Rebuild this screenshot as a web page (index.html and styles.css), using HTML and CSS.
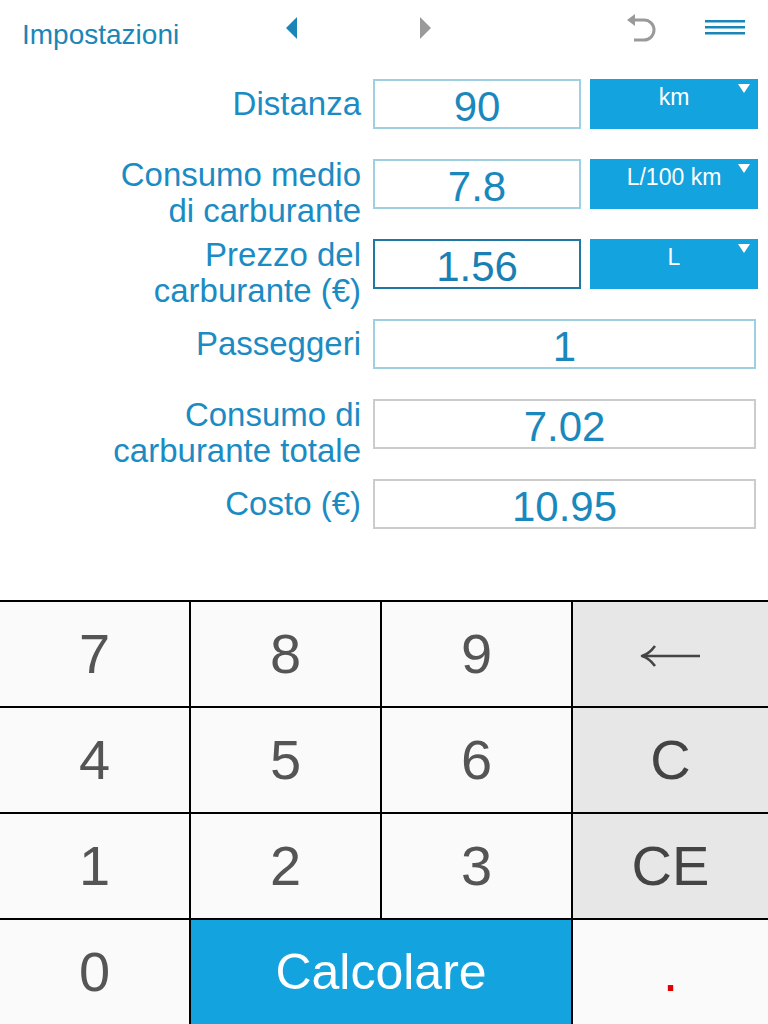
FILE: index.html
```html
<!DOCTYPE html>
<html lang="it">
<head>
<meta charset="utf-8">
<title>Calcolatore carburante</title>
<link rel="stylesheet" href="styles.css">
</head>
<body>
<div class="app">
  <header class="toolbar">
    <span class="settings">Impostazioni</span>
    <svg class="nav prev" width="11" height="22" viewBox="0 0 11 22"><path d="M11 0 L0 11 L11 22 Z" fill="#1a86b8"/></svg>
    <svg class="nav next" width="11" height="22" viewBox="0 0 11 22"><path d="M0 0 L11 11 L0 22 Z" fill="#9a9a9a"/></svg>
    <svg class="undo" width="32" height="32" viewBox="0 0 32 32"><path d="M8 8 H19 A10 10 0 0 1 19 28 H9" fill="none" stroke="#9a9a9a" stroke-width="3"/><path d="M2 8 L10 2 L10 14 Z" fill="#9a9a9a"/></svg>
    <svg class="menu" width="40" height="16" viewBox="0 0 40 16"><rect x="0" y="1" width="40" height="2.5" fill="#1a86b8"/><rect x="0" y="7" width="40" height="2.5" fill="#1a86b8"/><rect x="0" y="13" width="40" height="2.5" fill="#1a86b8"/></svg>
  </header>

  <main class="form">
    <div class="row">
      <div class="label single">Distanza</div>
      <div class="field input">90</div>
      <div class="unit">km<span class="caret"></span></div>
    </div>
    <div class="row">
      <div class="label">Consumo medio<br>di carburante</div>
      <div class="field input">7.8</div>
      <div class="unit">L/100 km<span class="caret"></span></div>
    </div>
    <div class="row">
      <div class="label">Prezzo del<br>carburante (€)</div>
      <div class="field input active">1.56</div>
      <div class="unit">L<span class="caret"></span></div>
    </div>
    <div class="row">
      <div class="label single">Passeggeri</div>
      <div class="field input wide">1</div>
    </div>
    <div class="row">
      <div class="label">Consumo di<br>carburante totale</div>
      <div class="field result wide">7.02</div>
    </div>
    <div class="row">
      <div class="label single">Costo (€)</div>
      <div class="field result wide">10.95</div>
    </div>
  </main>

  <div class="keypad">
    <div class="key">7</div>
    <div class="key">8</div>
    <div class="key">9</div>
    <div class="key fn" aria-label="←"><svg class="back" width="62" height="24" viewBox="0 0 62 24"><path d="M2.5 12 H60" stroke="#444" stroke-width="2.6" fill="none"/><path d="M15 2 Q9 10 2 12 Q9 14 15 22" stroke="#444" stroke-width="2.6" fill="none" stroke-linejoin="round"/></svg></div>
    <div class="key">4</div>
    <div class="key">5</div>
    <div class="key">6</div>
    <div class="key fn">C</div>
    <div class="key">1</div>
    <div class="key">2</div>
    <div class="key">3</div>
    <div class="key fn">CE</div>
    <div class="key">0</div>
    <div class="key calc">Calcolare</div>
    <div class="key dot">.</div>
  </div>
</div>
</body>
</html>
```

FILE: styles.css
```css
* {
  box-sizing: border-box;
}

html, body {
  margin: 0;
  padding: 0;
  background: #ffffff;
}

body {
  font-family: "Liberation Sans", Arial, "Helvetica Neue", sans-serif;
}

.app {
  width: 768px;
  height: 1024px;
  display: flex;
  flex-direction: column;
  overflow: hidden;
}

/* ---------- toolbar ---------- */
.toolbar {
  height: 60px;
  display: flex;
  align-items: flex-start;
  padding-left: 22px;
  flex: none;
}

.settings {
  width: 264px;
  flex: none;
  margin-top: 19px;
  font-size: 28px;
  line-height: 32px;
  color: #1a86b8;
}

.nav {
  flex: none;
  margin-top: 17px;
}

.next {
  margin-left: 123px;
}

.undo {
  flex: none;
  margin-left: 194px;
  margin-top: 12px;
}

.menu {
  flex: none;
  margin-left: 48px;
  margin-top: 19px;
}

/* ---------- form ---------- */
.form {
  padding-top: 19px;
  display: grid;
  grid-auto-rows: 80px;
}

.row {
  display: flex;
  align-items: flex-start;
}

.label {
  width: 361px;
  flex: none;
  margin-right: 12px;
  margin-top: -2px;
  text-align: right;
  font-size: 33px;
  line-height: 36px;
  color: #1b8bc4;
  white-space: nowrap;
}

.label.single {
  margin-top: 7px;
}

.field {
  flex: none;
  width: 208px;
  height: 50px;
  padding-top: 3px;
  border: 2px solid #9fd0e2;
  background: #ffffff;
  text-align: center;
  font-size: 42px;
  line-height: 46px;
  color: #1a88bd;
}

.field.active {
  border-color: #1f78a3;
  color: #1a80b3;
}

.field.wide {
  width: 383px;
}

.field.result {
  border-color: #cccccc;
}

.unit {
  position: relative;
  flex: none;
  width: 168px;
  height: 50px;
  margin-left: 9px;
  padding-top: 6px;
  background: #13a3de;
  color: #ffffff;
  text-align: center;
  font-size: 23px;
  line-height: 24px;
}

.caret {
  position: absolute;
  top: 5px;
  right: 8px;
  width: 0;
  height: 0;
  border-left: 6px solid transparent;
  border-right: 6px solid transparent;
  border-top: 9px solid #ffffff;
}

/* ---------- keypad ---------- */
.keypad {
  margin-top: auto;
  flex: none;
  height: 424px;
  display: grid;
  grid-template-columns: 189px 189px 189px 1fr;
  grid-template-rows: repeat(4, 104px);
  gap: 2px;
  padding-top: 2px;
  background: #000000;
}

.key {
  display: flex;
  align-items: center;
  justify-content: center;
  background: #fafafa;
  color: #555555;
  font-size: 56px;
  line-height: 1;
}

.key.fn {
  background: #e7e7e7;
  color: #444444;
}

.back {
  display: block;
  margin-top: 4px;
}

.key.calc {
  grid-column: span 2;
  background: #13a3de;
  color: #ffffff;
  font-size: 50px;
}

.key.dot {
  color: #e00000;
  background: #fafafa;
}
```
